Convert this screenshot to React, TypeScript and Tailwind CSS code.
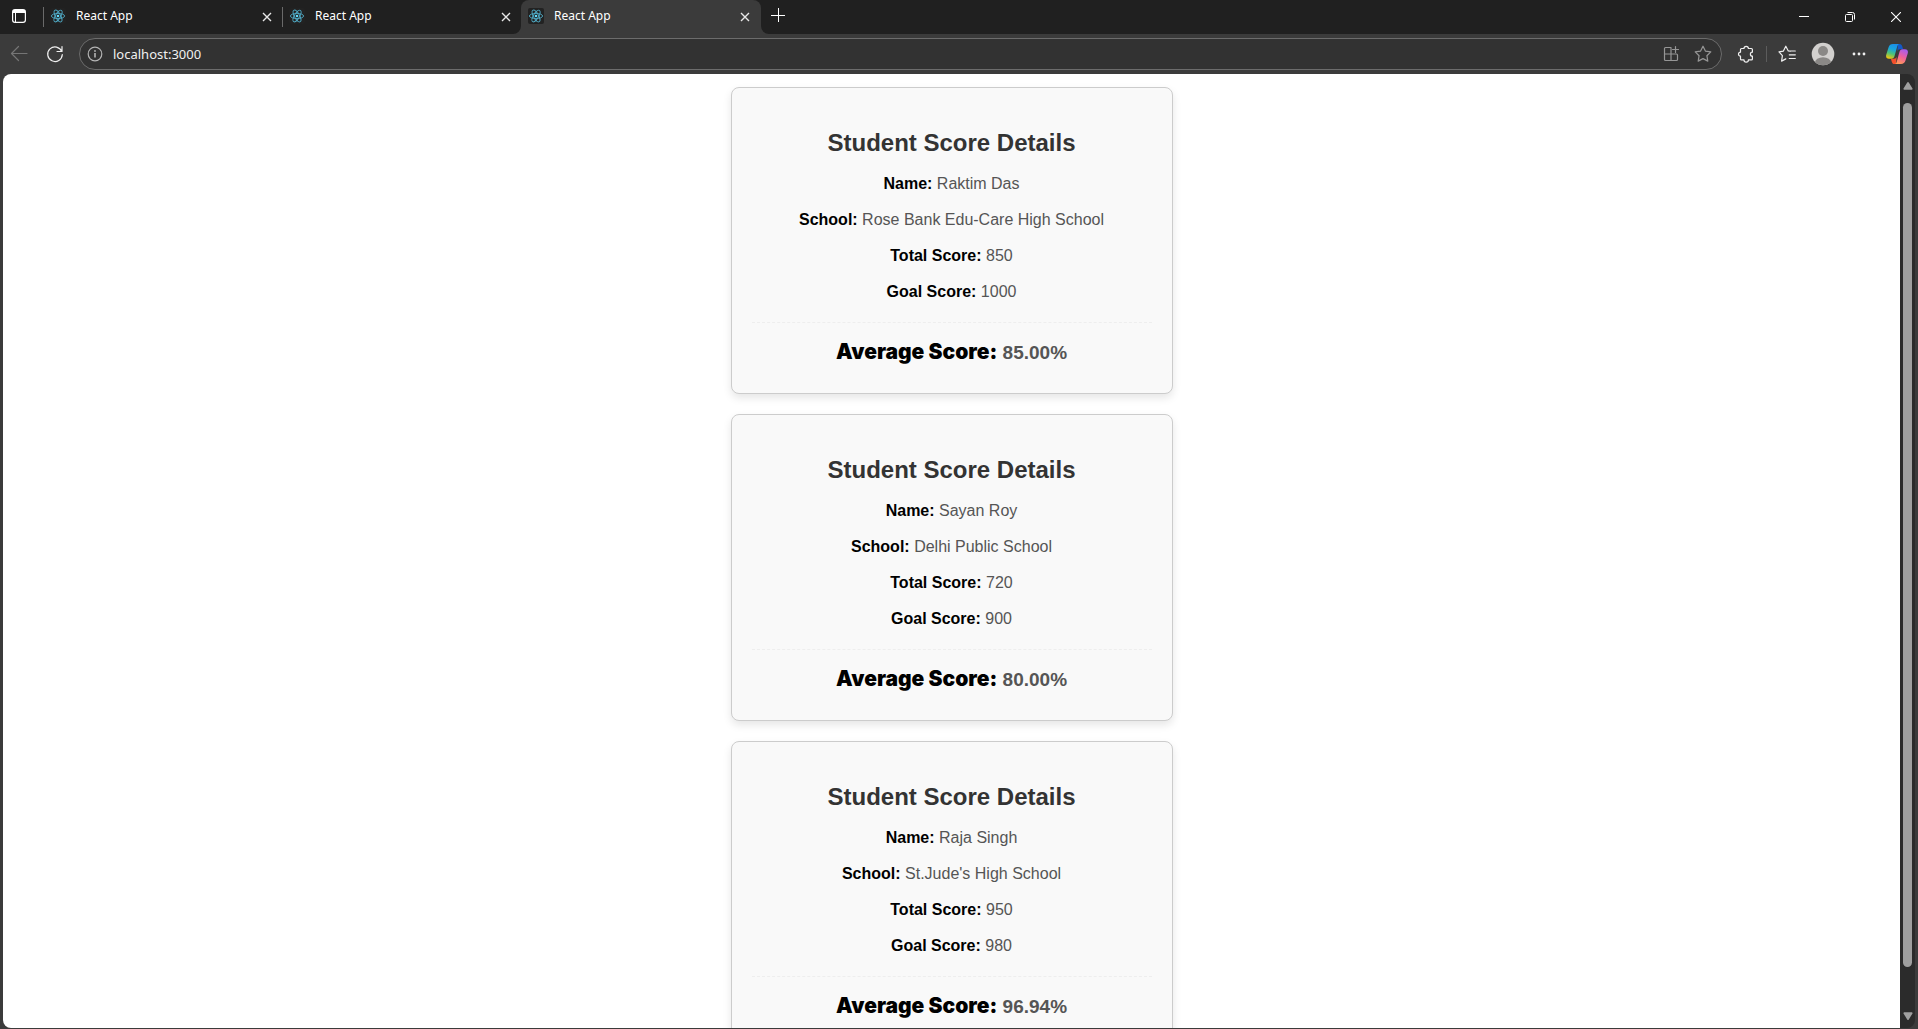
import React from "react";

type Student = { name: string; school: string; total: number; goal: number };

const students: Student[] = [
  { name: "Raktim Das", school: "Rose Bank Edu-Care High School", total: 850, goal: 1000 },
  { name: "Sayan Roy", school: "Delhi Public School", total: 720, goal: 900 },
  { name: "Raja Singh", school: "St.Jude's High School", total: 950, goal: 980 },
];

function ReactLogo() {
  return (
    <svg viewBox="0 0 16 16" className="size-4" fill="none" stroke="#4fa9c4" strokeWidth="0.9" aria-hidden="true">
      <ellipse cx="8" cy="8" rx="6.6" ry="2.6" />
      <ellipse cx="8" cy="8" rx="6.6" ry="2.6" transform="rotate(60 8 8)" />
      <ellipse cx="8" cy="8" rx="6.6" ry="2.6" transform="rotate(120 8 8)" />
      <circle cx="8" cy="8" r="1.3" fill="#61dafb" stroke="none" />
    </svg>
  );
}

function CloseIcon() {
  return (
    <svg viewBox="0 0 10 10" className="size-2.5" stroke="currentColor" strokeWidth="1.4" aria-hidden="true">
      <path d="M1 1l8 8M9 1l-8 8" />
    </svg>
  );
}

function Tab({ active = false }: { active?: boolean }) {
  return (
    <div
      role="tab"
      aria-selected={active}
      className={
        active
          ? "relative flex h-full w-60 items-center rounded-t-lg bg-[#3b3b3b] pr-2 pl-[7px]"
          : "flex h-full w-[239px] items-center pr-[7px]"
      }
    >
      {active ? (
        <>
          <Flare className="absolute bottom-0 -left-2 size-2" />
          <Flare className="absolute -right-2 bottom-0 size-2 -scale-x-100" />
        </>
      ) : (
        <span className="mr-1.5 h-5 w-px bg-[#6a6a6a]" />
      )}
      <span className="mb-0.5 rounded-xs bg-[#222222]">
        <ReactLogo />
      </span>
      <span className="mb-0.5 ml-2.5 grow text-[12px] leading-4 text-white">React App</span>
      <button type="button" aria-label="Close tab" className="flex size-4 items-center justify-center text-[#e8e8e8]">
        <CloseIcon />
      </button>
    </div>
  );
}

function Flare({ className }: { className: string }) {
  return (
    <svg viewBox="0 0 8 8" className={className} fill="#3b3b3b" aria-hidden="true">
      <path d="M8 0v8H0a8 8 0 0 0 8-8z" />
    </svg>
  );
}

function BarButton({ label, className, children }: { label: string; className: string; children: React.ReactNode }) {
  return (
    <button type="button" aria-label={label} className={`flex shrink-0 items-center justify-center ${className}`}>
      {children}
    </button>
  );
}

function Icon({ children }: { children: React.ReactNode }) {
  return (
    <svg
      viewBox="0 0 20 20"
      className="size-5"
      fill="none"
      stroke="currentColor"
      strokeWidth="1.2"
      strokeLinecap="round"
      strokeLinejoin="round"
      aria-hidden="true"
    >
      {children}
    </svg>
  );
}

function TabStrip() {
  return (
    <div className="flex h-[34px] shrink-0 items-center bg-[#202020]">
      <BarButton label="Tab actions" className="h-full w-[38px] text-white">
        <svg viewBox="0 0 14 14" className="mb-0.5 size-3.5" fill="none" stroke="currentColor" aria-hidden="true">
          <rect x="0.6" y="0.6" width="12.8" height="12.8" rx="2.4" strokeWidth="1.2" />
          <path d="M1 2.5h12" strokeWidth="3" />
          <path d="M3.5 4v9" strokeWidth="1" />
        </svg>
      </BarButton>
      <div role="tablist" className="ml-[5px] flex h-full">
        <Tab />
        <Tab />
        <Tab active />
      </div>
      <BarButton label="New tab" className="ml-[7px] h-full w-5 text-white">
        <svg viewBox="0 0 14 14" className="mb-1 size-3.5" stroke="currentColor" aria-hidden="true">
          <path d="M7.5 0v14M0 7.5h14" />
        </svg>
      </BarButton>
      <div className="ml-auto flex h-full text-white">
        <BarButton label="Minimize" className="w-[46px]">
          <svg viewBox="0 0 10 10" className="size-2.5" stroke="currentColor" aria-hidden="true">
            <path d="M0 4.5h10" />
          </svg>
        </BarButton>
        <BarButton label="Restore" className="w-[46px]">
          <svg viewBox="0 0 10 10" className="size-2.5" fill="none" stroke="currentColor" aria-hidden="true">
            <rect x="0.5" y="2.5" width="7" height="7" rx="1" />
            <path d="M2.5 0.5H7.5a2 2 0 0 1 2 2v5" />
          </svg>
        </BarButton>
        <BarButton label="Close" className="w-[45px]">
          <svg viewBox="0 0 10 10" className="size-2.5" stroke="currentColor" strokeWidth="1.1" aria-hidden="true">
            <path d="M0 0l10 10M10 0L0 10" />
          </svg>
        </BarButton>
      </div>
    </div>
  );
}

function CopilotLogo() {
  return (
    <svg viewBox="0 0 22 20" className="h-5 w-[22px]" aria-hidden="true">
      <defs>
        <linearGradient id="cp-left" x1="0.6" y1="0" x2="0.3" y2="1">
          <stop offset="0" stopColor="#1b8fe8" />
          <stop offset="0.35" stopColor="#1aa5dd" />
          <stop offset="0.65" stopColor="#4cc27a" />
          <stop offset="1" stopColor="#f3c60c" />
        </linearGradient>
        <linearGradient id="cp-right" x1="0.7" y1="0" x2="0.3" y2="1">
          <stop offset="0" stopColor="#a65cf0" />
          <stop offset="0.5" stopColor="#f0609c" />
          <stop offset="1" stopColor="#ff9a55" />
        </linearGradient>
      </defs>
      <path d="M12 0h1.600c1.500 0 2.200 1 2.700 2.600l.8 2.600H14c-1.500 0-2.300.8-2.700 2.200z" fill="#1358c8" />
      <path d="M10 20H8.400c-1.500 0-2.200-1-2.700-2.600L4.900 14.800H8c1.500 0 2.300-.8 2.700-2.200z" fill="#f4502c" />
      <path d="M7 0h6.200c-1.100.3-1.600 1.300-2 2.600L8.700 11.600c-.6 2.100-1.500 3.200-3.500 3.200H3c-2.600 0-3.400-1.900-2.700-4.400L2.500 3.400C3.200 1.100 4.600 0 7 0z" fill="url(#cp-left)" />
      <path d="M15 20H8.800c1.100-.3 1.600-1.300 2-2.600l2.500-9c.6-2.100 1.500-3.200 3.500-3.200H19c2.600 0 3.400 1.900 2.700 4.400l-2.200 7c-.7 2.300-2.100 3.400-4.500 3.400z" fill="url(#cp-right)" />
    </svg>
  );
}

function Toolbar() {
  return (
    <div className="flex h-10 shrink-0 items-center bg-[#3b3b3b] pr-[3px] text-[#f0f0f0]">
      <BarButton label="Back" className="h-8 w-[37px] text-[#757575]">
        <Icon>
          <path d="M18 9.500H2.500M9.500 2.500l-7 7 7 7" />
        </Icon>
      </BarButton>
      <BarButton label="Refresh" className="h-8 w-9">
        <Icon>
          <path d="M16.800 7.500A7.300 7.300 0 1 0 17.300 10.500M17 2.500v5h-5" />
        </Icon>
      </BarButton>
      <div className="ml-1.5 flex h-8 min-w-0 grow items-center rounded-full border border-[#6c6c6c] bg-[#323232] pr-0.5 pl-[5px]">
        <BarButton label="Site information" className="size-5 text-[#b4b4b4]">
          <svg viewBox="0 0 16 16" className="size-4" fill="none" stroke="currentColor" strokeWidth="1.200" aria-hidden="true">
            <circle cx="8" cy="8" r="6.800" />
            <path d="M8 7v4.500" strokeWidth="1.600" />
            <circle cx="8" cy="5" r="0.900" fill="currentColor" stroke="none" />
          </svg>
        </BarButton>
        <input
          type="text"
          aria-label="Address"
          defaultValue="localhost:3000"
          className="ml-2 h-6 min-w-0 grow bg-transparent text-[13px] text-[#f0f0f0] outline-none"
        />
        <BarButton label="Install app" className="size-8 text-[#969696]">
          <Icon>
            <path d="M9.500 3.500H4.500a1 1 0 0 0-1 1v11a1 1 0 0 0 1 1h11a1 1 0 0 0 1-1v-4.500a1 1 0 0 0-1-1H3.500M10 3.500v13M14.500 2.500v6M11.500 5.500h6" />
          </Icon>
        </BarButton>
        <BarButton label="Add to favorites" className="size-8 text-[#969696]">
          <Icon>
            <path d="M10 2.200l2.400 4.900 5.400.8-3.900 3.800.9 5.400-4.800-2.500-4.800 2.500.9-5.400L2.200 7.900l5.400-.8z" />
          </Icon>
        </BarButton>
      </div>
      <BarButton label="Extensions" className="ml-1.5 h-8 w-9">
        <Icon>
          <path d="M5.500 4.500H8a2.200 2.200 0 0 1 4.400 0h3a1 1 0 0 1 1 1v2.700a2 2 0 0 0 0 4v2.700a1 1 0 0 1-1 1h-3a2.200 2.200 0 0 1-4.400 0H5.500a1 1 0 0 1-1-1v-2.700a2 2 0 0 1 0-4V5.500a1 1 0 0 1 1-1z" />
        </Icon>
      </BarButton>
      <span className="mx-0.5 h-4 w-px bg-[#5c5c5c]" />
      <BarButton label="Favorites" className="h-8 w-9">
        <Icon>
          <path d="M13.300 7.200l-2-.2-2.500-4.800L6.400 7.100l-4.400.8 3.400 3.700-.8 5.500 4.200-2.200M12.300 7h6M12.300 10.800h6M12.300 14.500h6" />
        </Icon>
      </BarButton>
      <BarButton label="Profile" className="h-8 w-9">
        <svg viewBox="0 0 24 24" className="size-6" aria-hidden="true">
          <clipPath id="avatar">
            <circle cx="12" cy="12" r="11.300" />
          </clipPath>
          <g clipPath="url(#avatar)">
            <rect width="24" height="24" fill="#d2d0ce" />
            <circle cx="12" cy="9" r="5" fill="#8a8886" />
            <ellipse cx="12" cy="20.500" rx="8" ry="5.300" fill="#8a8886" />
          </g>
        </svg>
      </BarButton>
      <BarButton label="Settings and more" className="h-8 w-9">
        <svg viewBox="0 0 14 4" className="h-1 w-3.5" fill="currentColor" aria-hidden="true">
          <circle cx="2" cy="2" r="1.400" />
          <circle cx="7" cy="2" r="1.400" />
          <circle cx="12" cy="2" r="1.400" />
        </svg>
      </BarButton>
      <BarButton label="Copilot" className="ml-0.5 h-8 w-9">
        <CopilotLogo />
      </BarButton>
    </div>
  );
}

function Row({ label, value }: { label: string; value: string | number }) {
  return (
    <p className="text-[16px] leading-9 text-[#555555]">
      <strong className="font-bold text-black">{label}:</strong> {value}
    </p>
  );
}

function ScoreCard({ student }: { student: Student }) {
  return (
    <section className="mx-auto w-full max-w-[442px] rounded-lg border border-[#cccccc] bg-[#f9f9f9] p-5 text-center font-['Liberation_Sans',Arial,sans-serif] shadow-[0_4px_8px_rgba(0,0,0,0.1)]">
      <h2 className="mt-[21px] text-[24px] leading-7 font-bold text-[#333333]">Student Score Details</h2>
      <div className="mt-[9px] mb-3">
        <Row label="Name" value={student.name} />
        <Row label="School" value={student.school} />
        <Row label="Total Score" value={student.total} />
        <Row label="Goal Score" value={student.goal} />
      </div>
      <p className="border-t border-dashed border-[#eeeeee] pt-[18px] pb-2 text-[19px] leading-6 font-bold text-[#555555]">
        <strong className="font-['Inter',sans-serif] text-[21px] leading-none font-black text-black">Average Score:</strong>{" "}
        {((student.total / student.goal) * 100).toFixed(2)}%
      </p>
    </section>
  );
}

function ScrollTrack() {
  return (
    <div className="flex w-[15px] shrink-0 flex-col items-center rounded-r-lg bg-[#2b2b2b] pt-2 pb-2">
      <svg viewBox="0 0 10 8" className="h-2 w-2.5" fill="#9f9f9f" aria-hidden="true">
        <path d="M4.200.6a1 1 0 0 1 1.600 0L9.500 6.500a.8.8 0 0 1-.7 1.200H1.200a.8.8 0 0 1-.7-1.200z" />
      </svg>
      <div className="flex w-[9px] grow flex-col pt-[13px]">
        <span className="h-[95%] rounded-full bg-[#9f9f9f]" />
      </div>
      <svg viewBox="0 0 10 8" className="h-2 w-2.5" fill="#9f9f9f" aria-hidden="true">
        <path d="M4.200 7.400a1 1 0 0 0 1.600 0L9.500 1.500A.8.8 0 0 0 8.800.3H1.200a.8.8 0 0 0-.7 1.200z" />
      </svg>
    </div>
  );
}

export default function App() {
  return (
    <div className="flex h-screen flex-col overflow-hidden bg-[#3b3b3b] font-['Noto_Sans',sans-serif]">
      <TabStrip />
      <Toolbar />
      <div className="mr-[3px] mb-px ml-[3px] flex min-h-0 grow">
        <main className="grow space-y-5 overflow-y-auto rounded-l-lg bg-white pt-[13px] pb-5 [scrollbar-width:none]">
          {students.map((s) => (
            <ScoreCard key={s.name} student={s} />
          ))}
        </main>
        <ScrollTrack />
      </div>
    </div>
  );
}
